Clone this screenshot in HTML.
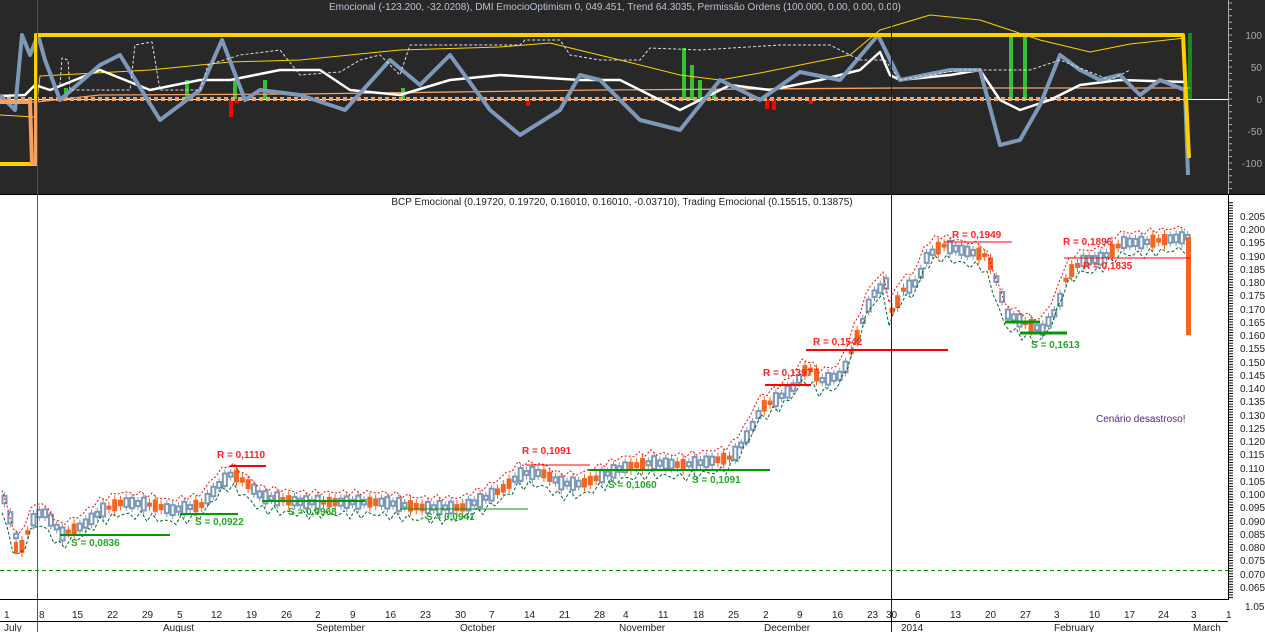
<!DOCTYPE html>
<html><head><meta charset="utf-8"><style>
html,body{margin:0;padding:0;background:#fff;width:1265px;height:632px;overflow:hidden}
svg{display:block;font-family:"Liberation Sans",sans-serif}
</style></head><body>
<svg id="s" width="1265" height="632" xmlns="http://www.w3.org/2000/svg">
<rect x="0" y="0" width="1265" height="195" fill="#282828"/>
<line x1="0" y1="194.5" x2="1265" y2="194.5" stroke="#000"/>
<line x1="1228.5" y1="0" x2="1228.5" y2="194" stroke="#aaa"/>
<g fill="#aaa" font-size="10">
<text x="1262" y="39" text-anchor="end">100</text>
<text x="1262" y="71" text-anchor="end">50</text>
<text x="1262" y="103" text-anchor="end">0</text>
<text x="1262" y="135" text-anchor="end">-50</text>
<text x="1262" y="167" text-anchor="end">-100</text>
</g>
<g id="ticksTop" stroke="#aaa"></g>
<text x="615" y="10" fill="#b8c4d4" font-size="10" text-anchor="middle">Emocional (-123.200, -32.0208), DMI EmocioOptimism 0, 049.451, Trend 64.3035, Permissão Ordens (100.000, 0.00, 0.00, 0.00)</text>
<line x1="0" y1="99.5" x2="1228" y2="99.5" stroke="#fff"/>
<g id="topg"></g>
<text x="622" y="205" fill="#222" font-size="10" text-anchor="middle">BCP Emocional (0.19720, 0.19720, 0.16010, 0.16010, -0.03710), Trading Emocional (0.15515, 0.13875)</text>
<line x1="1228.5" y1="195" x2="1228.5" y2="600" stroke="#000"/>
<g id="ticksBot" stroke="#000"></g>
<g fill="#222" font-size="10">
<text x="1240" y="220">0.205</text><text x="1240" y="233">0.200</text><text x="1240" y="246">0.195</text><text x="1240" y="260">0.190</text><text x="1240" y="273">0.185</text><text x="1240" y="286">0.180</text><text x="1240" y="299">0.175</text><text x="1240" y="313">0.170</text><text x="1240" y="326">0.165</text><text x="1240" y="339">0.160</text><text x="1240" y="352">0.155</text><text x="1240" y="366">0.150</text><text x="1240" y="379">0.145</text><text x="1240" y="392">0.140</text><text x="1240" y="405">0.135</text><text x="1240" y="419">0.130</text><text x="1240" y="432">0.125</text><text x="1240" y="445">0.120</text><text x="1240" y="458">0.115</text><text x="1240" y="472">0.110</text><text x="1240" y="485">0.105</text><text x="1240" y="498">0.100</text><text x="1240" y="511">0.095</text><text x="1240" y="525">0.090</text><text x="1240" y="538">0.085</text><text x="1240" y="551">0.080</text><text x="1240" y="564">0.075</text><text x="1240" y="578">0.070</text><text x="1240" y="591">0.065</text><text x="1245" y="610">1.05</text>
</g>
<line x1="0" y1="570.5" x2="1228" y2="570.5" stroke="#090" stroke-dasharray="4,3"/>
<g id="botg"></g>
<rect x="37" y="0" width="1" height="632" fill="#1a7a1a"/>
<rect x="891" y="0" width="1" height="632" fill="#0000ff"/>
<line x1="0" y1="599.5" x2="1228" y2="599.5" stroke="#000"/>
<line x1="0" y1="621.5" x2="1228" y2="621.5" stroke="#000"/>
<g fill="#222" font-size="10">
<text x="4" y="618">1</text><text x="39" y="618">8</text><text x="72" y="618">15</text><text x="107" y="618">22</text><text x="142" y="618">29</text><text x="177" y="618">5</text><text x="211" y="618">12</text><text x="246" y="618">19</text><text x="281" y="618">26</text><text x="315" y="618">2</text><text x="350" y="618">9</text><text x="385" y="618">16</text><text x="420" y="618">23</text><text x="455" y="618">30</text><text x="489" y="618">7</text><text x="524" y="618">14</text><text x="559" y="618">21</text><text x="594" y="618">28</text><text x="623" y="618">4</text><text x="658" y="618">11</text><text x="693" y="618">18</text><text x="728" y="618">25</text><text x="763" y="618">2</text><text x="797" y="618">9</text><text x="832" y="618">16</text><text x="867" y="618">23</text><text x="886" y="618">30</text><text x="915" y="618">6</text><text x="950" y="618">13</text><text x="985" y="618">20</text><text x="1020" y="618">27</text><text x="1054" y="618">3</text><text x="1089" y="618">10</text><text x="1124" y="618">17</text><text x="1158" y="618">24</text><text x="1191" y="618">3</text><text x="1226" y="618">1</text>
<text x="4" y="631">July</text><text x="163" y="631">August</text><text x="316" y="631">September</text><text x="460" y="631">October</text><text x="619" y="631">November</text><text x="764" y="631">December</text><text x="901" y="631">2014</text><text x="1054" y="631">February</text><text x="1193" y="631">March</text>
</g>
<g font-size="10" font-weight="bold">
<text x="217" y="458" fill="#f22">R = 0,1110</text>
<text x="522" y="454" fill="#f22">R = 0,1091</text>
<text x="763" y="376" fill="#f22">R = 0,1397</text>
<text x="813" y="345" fill="#f22">R = 0,1542</text>
<text x="952" y="238" fill="#f22">R = 0,1949</text>
<text x="1063" y="245" fill="#f22">R = 0,1896</text>
<text x="1083" y="269" fill="#f22">R = 0,1835</text>
<text x="71" y="546" fill="#2a2">S = 0,0836</text>
<text x="195" y="525" fill="#2a2">S = 0,0922</text>
<text x="288" y="515" fill="#2a2">S = 0,0968</text>
<text x="426" y="520" fill="#2a2">S = 0,0941</text>
<text x="608" y="488" fill="#2a2">S = 0,1060</text>
<text x="692" y="483" fill="#2a2">S = 0,1091</text>
<text x="1031" y="348" fill="#2a2">S = 0,1613</text>
</g>
<text x="1096" y="422" fill="#602080" font-size="10">Cenário desastroso!</text>
</svg>
<script>
(function(){
var NS="http://www.w3.org/2000/svg";
function el(p,t,a){var e=document.createElementNS(NS,t);for(var k in a)e.setAttribute(k,a[k]);p.appendChild(e);return e;}
var tg=document.getElementById('topg'),bg=document.getElementById('botg');
function yp(p){return 216+(0.205-p)/0.005*13.25;}
var pts=[[2,.098],[18,.079],[30,.09],[40,.094],[60,.085],[80,.088],[100,.094],[120,.097],[150,.096],[170,.094],[200,.096],[215,.103],[230,.108],[245,.104],[260,.099],[280,.098],[300,.097],[340,.097],[380,.097],[420,.095],[460,.095],[480,.098],[500,.102],[520,.108],[540,.108],[560,.104],[580,.104],[600,.107],[620,.11],[650,.112],[680,.111],[700,.112],[730,.114],[745,.122],[760,.133],[775,.136],[790,.140],[805,.148],[820,.143],[840,.145],[855,.16],[870,.175],[885,.180],[890,.168],[900,.177],[915,.18],[925,.19],[940,.194],[960,.192],[985,.19],[995,.18],[1005,.168],[1020,.165],[1040,.162],[1055,.17],[1065,.183],[1080,.188],[1100,.189],[1120,.195],[1140,.195],[1160,.196],[1185,.197]];
function price(x){for(var i=1;i<pts.length;i++){if(x<=pts[i][0]){var a=pts[i-1],b=pts[i];return a[1]+(b[1]-a[1])*(x-a[0])/(b[0]-a[0]);}}return pts[pts.length-1][1];}
var up="",dn="";
for(var x=2;x<=1186;x+=5.8){var p=price(x),y=yp(p),r=Math.sin(x*1.7)*0.5+0.5;var h=4+r*9;
up+=(x|0)+","+(y-7-r*6).toFixed(1)+" ";dn+=(x|0)+","+(y+7+(1-r)*10).toFixed(1)+" ";
var org=(Math.floor(x*13)%3==0);
el(bg,'line',{x1:x+2.5,x2:x+2.5,y1:y-h/2-4,y2:y+h/2+4,stroke:org?'#f26522':'#7d98b8'});
if(org)el(bg,'rect',{x:x,y:y-h/2,width:5,height:h,fill:'#f26522'});
else el(bg,'rect',{x:x+0.5,y:y-h/2,width:4,height:h,fill:'#fff',stroke:'#7d98b8','stroke-width':2});}
el(bg,'polyline',{points:up,fill:'none',stroke:'#f00','stroke-dasharray':'2,2'});
el(bg,'polyline',{points:dn,fill:'none',stroke:'#063','stroke-dasharray':'3,2'});
el(bg,'rect',{x:1186,y:yp(.197),width:5,height:yp(.160)-yp(.197),fill:'#f26522'});
el(bg,'rect',{x:14,y:yp(.082),width:4,height:12,fill:'#f26522'});
[[60,170,535,'#090',2],[180,238,514,'#090',2],[262,365,501,'#090',2],[400,528,509,'#090',1],[588,770,470,'#090',2],[230,266,466,'#f00',2],[526,590,465,'#f00',1],[765,811,385,'#f00',2],[806,948,350,'#f00',2],[944,1012,242,'#f00',1],[1064,1190,258,'#f00',1],[1005,1040,322,'#090',3],[1020,1067,333,'#090',3]].forEach(function(l){el(bg,'line',{x1:l[0],x2:l[1],y1:l[2],y2:l[2],stroke:l[3],'stroke-width':l[4]});});
function tp(arr,st,w,dash){var s="";arr.forEach(function(a){s+=a[0]+","+a[1]+" ";});var o={points:s,fill:'none',stroke:st,'stroke-width':w,'stroke-linejoin':'round'};if(dash)o['stroke-dasharray']=dash;el(tg,'polyline',o);}
[[66,88,99],[187,80,99],[235,78,99],[265,80,99],[403,88,99],[684,48,99],[692,65,99],[700,80,99],[714,88,99],[1011,33,99],[1025,33,99]].forEach(function(b){el(tg,'rect',{x:b[0]-2,y:b[1],width:4,height:b[2]-b[1],fill:'#33c033'});});
el(tg,'rect',{x:1188,y:33,width:4,height:66,fill:'#1a8a1a'});
[[231,99,117],[528,99,106],[767,99,109],[774,99,110],[811,99,104],[237,99,103]].forEach(function(b){el(tg,'rect',{x:b[0]-2,y:b[1],width:4,height:b[2]-b[1],fill:'#f00'});});
for(var x=0;x<1190;x+=7)el(tg,'rect',{x:x,y:97,width:4,height:4,fill:'#f4a060'});
tp([[0,102],[36,102],[100,95],[300,94],[600,90],[900,88],[1190,88]],'#f4a060',1.3);
tp([[0,115],[35,117],[40,76],[150,70],[230,62],[300,60],[400,50],[500,47],[550,43],[620,60],[680,75],[720,80],[760,73],[850,55],[880,30],[930,15],[980,20],[1040,40],[1090,52],[1130,44],[1185,38]],'#ffd000',1);
tp([[0,96],[25,95],[35,85],[50,90],[100,70],[150,90],[200,80],[230,80],[280,70],[320,70],[350,90],[400,95],[450,80],[500,75],[580,80],[620,80],[680,110],[730,85],[770,90],[820,80],[860,70],[880,52],[890,75],[900,80],[950,75],[980,70],[1000,100],[1020,110],[1050,100],[1080,85],[1120,80],[1185,82]],'#ffffff',2.5);
tp([[0,95],[15,110],[22,35],[30,55],[38,35],[45,60],[60,100],[100,65],[120,55],[160,120],[200,90],[222,40],[245,100],[260,90],[300,95],[330,105],[345,110],[390,60],[420,85],[450,55],[490,110],[520,135],[560,110],[580,75],[600,80],[640,120],[680,130],[700,105],[720,80],[760,100],[800,72],[840,80],[878,35],[900,80],[950,70],[980,70],[1000,145],[1020,140],[1040,105],[1060,55],[1080,70],[1100,80],[1120,75],[1140,95],[1160,80],[1185,90],[1188,175]],'#7d98b8',4);
tp([[0,164],[36,164],[36,35],[1183,35],[1189,158]],'#ffd000',4);
tp([[0,102],[30,102],[32,163],[36,163],[36,100]],'#f4a060',4);
tp([[60,85],[62,58],[68,60],[70,90],[130,90],[135,45],[152,42],[160,90],[200,90],[208,65],[240,55],[280,50],[300,75],[340,72],[360,60],[380,55],[400,75],[410,45],[440,45],[470,45],[480,45],[520,45],[525,40],[560,40],[570,55],[600,60],[640,60],[650,48],[700,50],[780,45],[800,45],[830,45],[860,60],[885,60],[900,80],[960,70],[1030,70],[1060,60],[1110,80],[1130,70]],'#ddd',1,'3,2');
var tt=document.getElementById('ticksTop');for(var y=3;y<192;y+=6.4)el(tt,'line',{x1:1228,x2:1232,y1:y,y2:y});
var tb=document.getElementById('ticksBot');for(var y=216-13.25;y<598;y+=2.65)el(tb,'line',{x1:1228,x2:1233,y1:y,y2:y});
})();
</script>
</body></html>
